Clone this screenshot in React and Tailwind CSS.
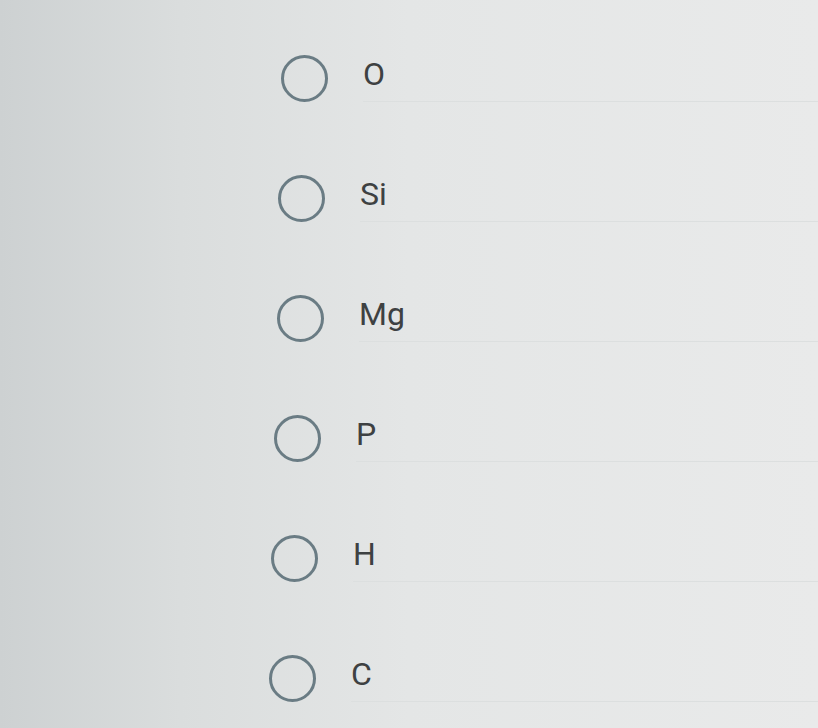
const options = [
  { label: "O", shift: "ml-[281px]" },
  { label: "Si", shift: "ml-[278px]" },
  { label: "Mg", shift: "ml-[277px]" },
  { label: "P", shift: "ml-[274px]" },
  { label: "H", shift: "ml-[271px]" },
  { label: "C", shift: "ml-[269px]" },
];

export default function App() {
  return (
    <div className="h-[728px] w-[818px] overflow-hidden bg-[linear-gradient(90deg,#cdd1d2_0%,#dadddd_22%,#e4e6e6_50%,#e9eaea_100%)] pt-[18px] font-['Roboto',sans-serif]">
      <div role="radiogroup" className="flex flex-col">
        {options.map((opt) => (
          <label key={opt.label} className={`flex h-[120px] items-center ${opt.shift}`}>
            <span className="h-[47px] w-[47px] shrink-0 rounded-full border-[3.5px] border-[#6a7c84]" />
            <span className="ml-[35px] flex h-[48px] flex-1 items-center border-b border-[#dcdfdf] pb-[7px] text-[32px] leading-none text-[#3e4142]">
              {opt.label}
            </span>
          </label>
        ))}
      </div>
    </div>
  );
}
